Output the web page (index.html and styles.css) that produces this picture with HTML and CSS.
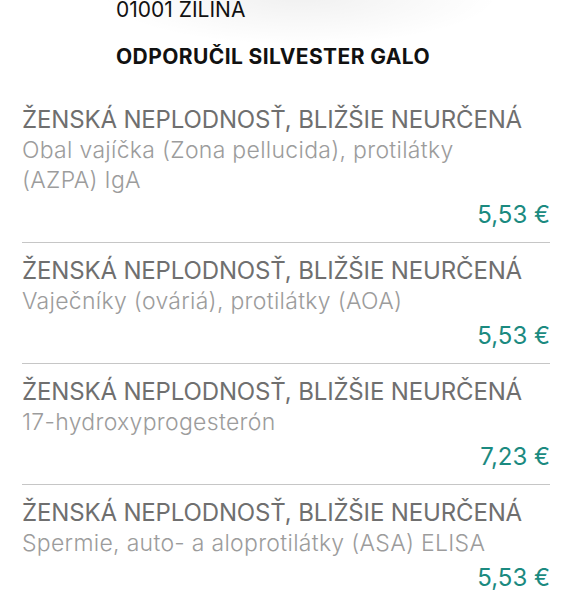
FILE: index.html
```html
<!DOCTYPE html>
<html lang="sk">
<head>
  <meta charset="UTF-8">
  <meta name="viewport" content="width=device-width, initial-scale=1.0">
  <title>Odporúčanie</title>
  <link rel="stylesheet" href="styles.css">
</head>
<body>
  <div class="header">
    <div class="city">01001 ZILINA</div>
    <div class="doctor">ODPORUČIL SILVESTER GALO</div>
  </div>
  <div class="list">
    <div class="item">
      <div class="item-title">ŽENSKÁ NEPLODNOSŤ, BLIŽŠIE NEURČENÁ</div>
      <div class="item-desc">Obal vajíčka (Zona pellucida), protilátky (AZPA) IgA</div>
      <div class="item-price">5,53 €</div>
    </div>
    <div class="item">
      <div class="item-title">ŽENSKÁ NEPLODNOSŤ, BLIŽŠIE NEURČENÁ</div>
      <div class="item-desc">Vaječníky (ováriá), protilátky (AOA)</div>
      <div class="item-price">5,53 €</div>
    </div>
    <div class="item">
      <div class="item-title">ŽENSKÁ NEPLODNOSŤ, BLIŽŠIE NEURČENÁ</div>
      <div class="item-desc">17-hydroxyprogesterón</div>
      <div class="item-price">7,23 €</div>
    </div>
    <div class="item">
      <div class="item-title">ŽENSKÁ NEPLODNOSŤ, BLIŽŠIE NEURČENÁ</div>
      <div class="item-desc">Spermie, auto- a aloprotilátky (ASA) ELISA</div>
      <div class="item-price">5,53 €</div>
    </div>
  </div>
</body>
</html>
```

FILE: styles.css
```css
body {
  margin: 0;
  background: #fff;
  font-family: Inter, 'Noto Sans', sans-serif;
  overflow: hidden;
}
.header {
  padding: 0 0 0 116px;
  margin-top: -5px;
  height: 97px;
  background: radial-gradient(ellipse 200px 50px at 300px 0, rgba(0,0,0,0.06), rgba(0,0,0,0));
}
.city {
  font-size: 21px;
  line-height: 30px;
  color: #111;
}
.doctor {
  margin-top: 17px;
  font-size: 21px;
  line-height: 30px;
  font-weight: 700;
  letter-spacing: 0.4px;
  color: #111;
}
.list {
  padding: 0 22px;
}
.item {
  padding: 13px 0 12px;
  border-bottom: 1.5px solid #c6c6c6;
}
.item-title {
  font-size: 24px;
  line-height: 30px;
  letter-spacing: -0.15px;
  color: #6f6f6f;
}
.item-desc {
  font-size: 23px;
  line-height: 30px;
  font-weight: 300;
  letter-spacing: 0.3px;
  color: #9c9c9c;
  padding-right: 60px;
}
.item-price {
  margin-top: 5px;
  text-align: right;
  font-size: 24px;
  line-height: 30px;
  color: #1b8a80;
}
```
